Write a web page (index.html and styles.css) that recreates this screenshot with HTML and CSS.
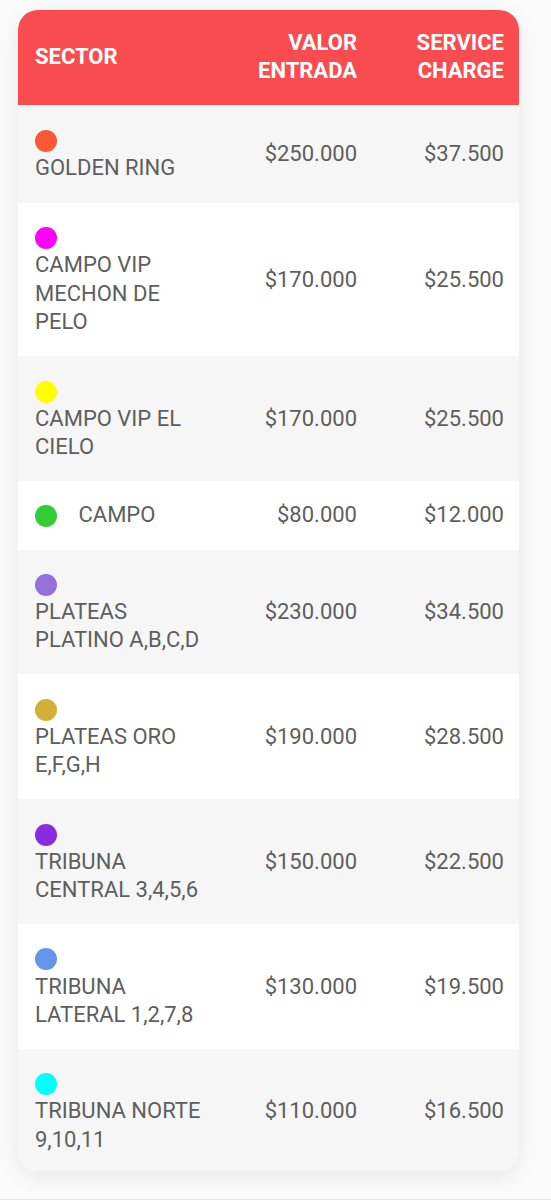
FILE: index.html
```html
<!DOCTYPE html>
<html lang="es">
<head>
  <meta charset="UTF-8" />
  <meta name="viewport" content="width=device-width, initial-scale=1.0" />
  <title>Precios por sector</title>
  <link rel="stylesheet" href="styles.css">
</head>
<body>
  <div class="page">
    <div class="card">
      <table class="prices">
        <thead>
          <tr>
            <th class="col-sector">SECTOR</th>
            <th class="col-num">VALOR<br>ENTRADA</th>
            <th class="col-num col-last">SERVICE<br>CHARGE</th>
          </tr>
        </thead>
        <tbody>
          <tr class="first-row">
            <td class="col-sector"><span class="dot dot-orange"></span> <span class="name">GOLDEN RING</span></td>
            <td class="col-num">$250.000</td>
            <td class="col-num col-last">$37.500</td>
          </tr>
          <tr>
            <td class="col-sector"><span class="dot dot-magenta"></span> <span class="name">CAMPO VIP MECHON DE PELO</span></td>
            <td class="col-num">$170.000</td>
            <td class="col-num col-last">$25.500</td>
          </tr>
          <tr>
            <td class="col-sector"><span class="dot dot-yellow"></span> <span class="name">CAMPO VIP EL CIELO</span></td>
            <td class="col-num">$170.000</td>
            <td class="col-num col-last">$25.500</td>
          </tr>
          <tr>
            <td class="col-sector"><span class="dot dot-green"></span> <span class="name">CAMPO</span></td>
            <td class="col-num">$80.000</td>
            <td class="col-num col-last">$12.000</td>
          </tr>
          <tr>
            <td class="col-sector"><span class="dot dot-lavender"></span> <span class="name">PLATEAS PLATINO A,B,C,D</span></td>
            <td class="col-num">$230.000</td>
            <td class="col-num col-last">$34.500</td>
          </tr>
          <tr>
            <td class="col-sector"><span class="dot dot-gold"></span> <span class="name">PLATEAS ORO E,F,G,H</span></td>
            <td class="col-num">$190.000</td>
            <td class="col-num col-last">$28.500</td>
          </tr>
          <tr>
            <td class="col-sector"><span class="dot dot-purple"></span> <span class="name">TRIBUNA CENTRAL 3,4,5,6</span></td>
            <td class="col-num">$150.000</td>
            <td class="col-num col-last">$22.500</td>
          </tr>
          <tr>
            <td class="col-sector"><span class="dot dot-blue"></span> <span class="name">TRIBUNA LATERAL 1,2,7,8</span></td>
            <td class="col-num">$130.000</td>
            <td class="col-num col-last">$19.500</td>
          </tr>
          <tr class="last-row">
            <td class="col-sector"><span class="dot dot-cyan"></span> <span class="name">TRIBUNA NORTE 9,10,11</span></td>
            <td class="col-num">$110.000</td>
            <td class="col-num col-last">$16.500</td>
          </tr>
        </tbody>
      </table>
    </div>
  </div>
</body>
</html>
```

FILE: styles.css
```css
body {
  margin: 0;
  font-family: Roboto, 'Noto Sans', sans-serif;
  background: #fafafa;
}

.page {
  padding: 10px 0 28px 18px;
  border-bottom: 1px solid #e6e6e6;
}

.card {
  width: 501px;
  border-radius: 20px;
  overflow: hidden;
  background: #ffffff;
  box-shadow: 0 6px 22px rgba(0,0,0,0.07);
}

.prices {
  width: 100%;
  border-collapse: collapse;
  table-layout: fixed;
  font-size: 22px;
  line-height: 28.3px;
}

.prices th {
  background: #f94c51;
  color: #ffffff;
  font-weight: 700;
  padding: 19px 16px;
  vertical-align: middle;
}

.prices td {
  color: #5e5e5e;
  padding: 20px 16px;
  vertical-align: middle;
}

.prices tbody tr:nth-child(odd) {
  background: #f6f6f6;
}

.prices .first-row td {
  padding-top: 21px;
  padding-bottom: 21px;
}

.prices .last-row td {
  padding-bottom: 17px;
}

.col-sector {
  width: 176px;
  padding-left: 17px !important;
  text-align: left;
}

.col-num {
  text-align: right;
}

.col-last {
  width: 115px;
  padding-right: 15px !important;
}

.name {
  display: inline-block;
}

.dot {
  display: inline-block;
  width: 22px;
  height: 22px;
  border-radius: 50%;
  vertical-align: middle;
  margin-right: 16px;
}

.dot-orange { background: #ff5733; }
.dot-magenta { background: #ff00ff; }
.dot-yellow { background: #ffff00; }
.dot-green { background: #32cd32; }
.dot-lavender { background: #9370db; }
.dot-gold { background: #d4af37; }
.dot-purple { background: #8a2be2; }
.dot-blue { background: #6495ed; }
.dot-cyan { background: #00ffff; }
```
